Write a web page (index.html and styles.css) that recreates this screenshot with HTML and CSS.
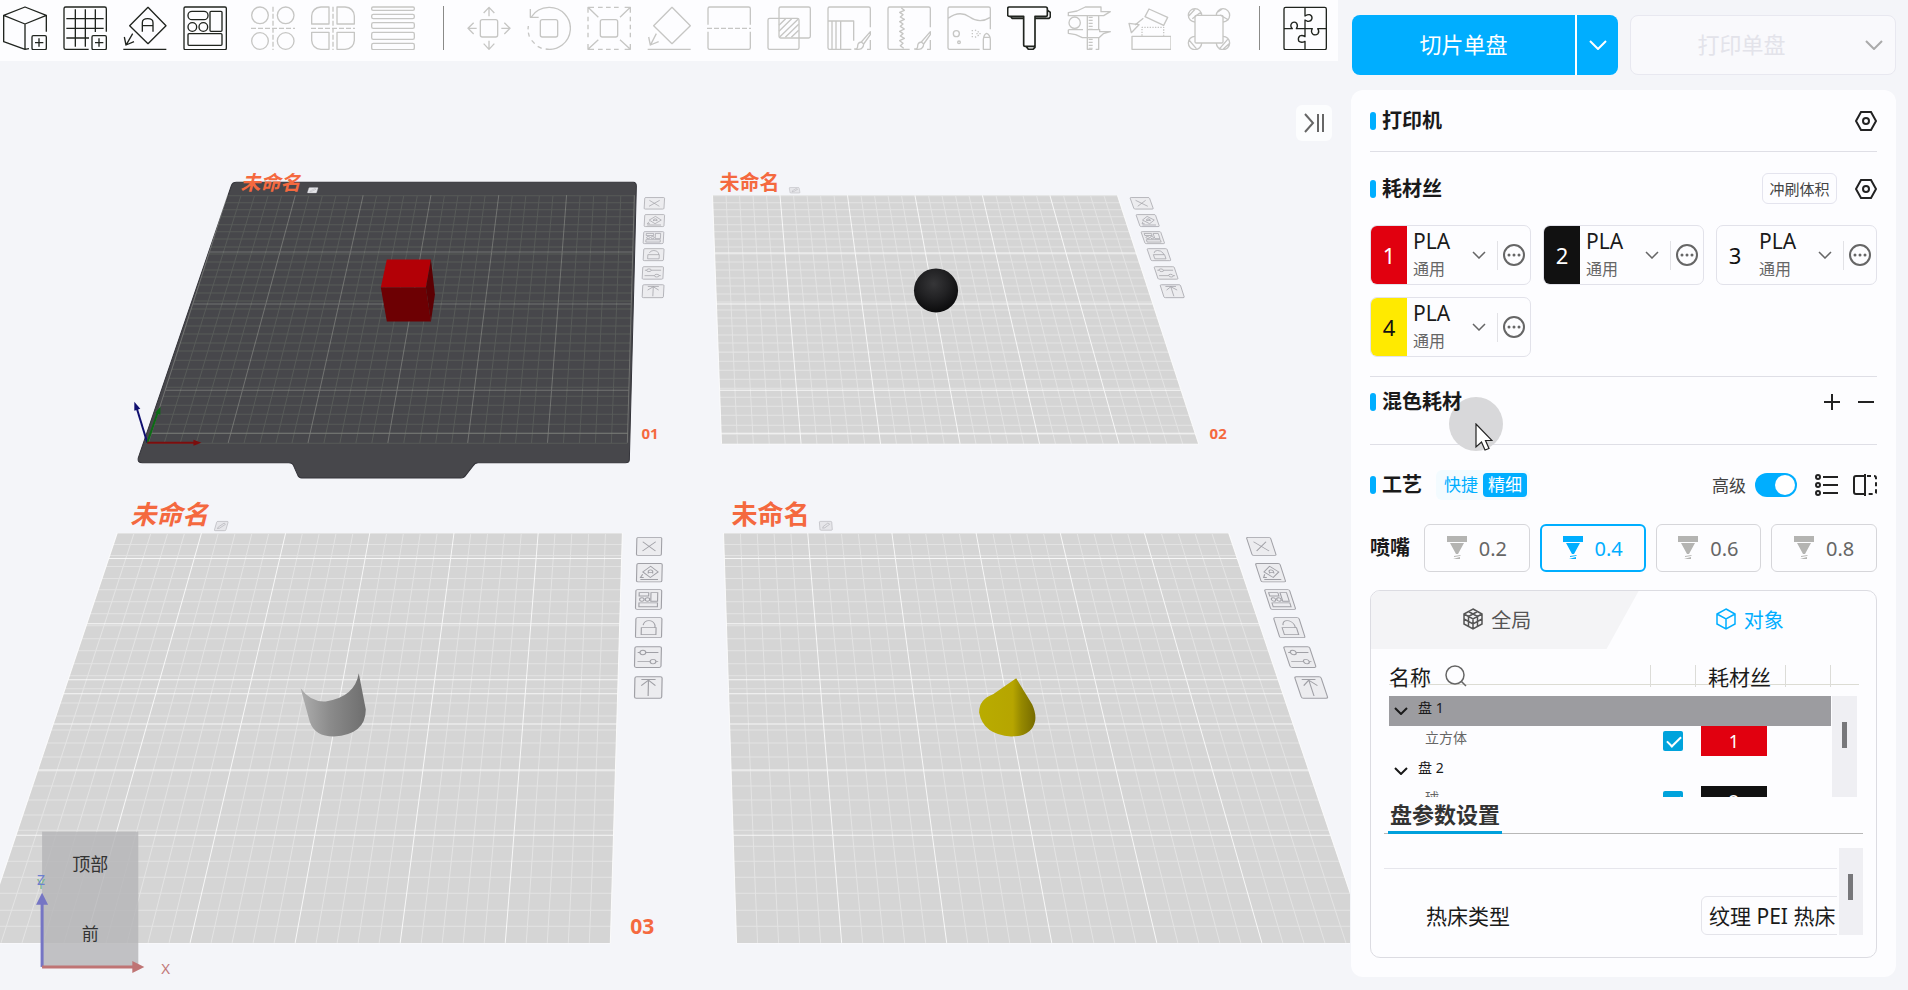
FILE: index.html
```html
<!DOCTYPE html>
<html lang="zh-CN">
<head>
<meta charset="utf-8">
<title>切片</title>
<link rel="stylesheet" href="styles.css">
</head>
<body>
<div class="app">
<main class="workspace">
  <nav class="toolbar" aria-label="工具栏">
    <button class="tool" aria-label="添加模型"><svg viewBox="10 18 132 132"><path d="M140 95V46L76 21 12 46V125L76 148 88 146M12 46 76 72 140 46M76 72V148"/><rect x="97" y="107" width="43" height="42" rx="4"/><path d="M118 115V140M106 128H131"/></svg></button>
    <button class="tool" aria-label="添加盘"><svg viewBox="190 18 132 132"><path d="M320 95V26Q320 21 315 21H198Q193 21 193 26V143Q193 148 198 148H267M227 28V140M257 28V140M287 28V96M200 56H312M200 85H312M200 114H268"/><rect x="277" y="107" width="43" height="42" rx="4"/><path d="M298 115V140M286 128H311"/></svg></button>
    <button class="tool" aria-label="自动朝向"><svg viewBox="370 18 132 132"><path d="M445 22 499 77 445 131 390 77ZM428 95V68Q428 56 444 56T460 68V95M428 77H460M371 148H500M399 101 380 134M374 111 379 135 403 125"/></svg></button>
    <button class="tool" aria-label="自动摆放"><svg viewBox="550 18 132 132"><rect x="553" y="21" width="127" height="128" rx="4"/><rect x="565" y="34" width="60" height="25" rx="12"/><rect x="631" y="34" width="36" height="60" rx="3"/><circle cx="578" cy="81" r="13"/><circle cx="611" cy="81" r="13"/><rect x="565" y="101" width="102" height="35" rx="3"/></svg></button>
    <button class="tool off group" disabled aria-label="拆分为对象"><svg viewBox="754 18 132 132"><circle cx="781" cy="46" r="25"/><circle cx="858" cy="46" r="25"/><circle cx="781" cy="123" r="25"/><circle cx="858" cy="123" r="25"/><path stroke-dasharray="15 6" d="M820 20V150M754 85H886"/></svg></button>
    <button class="tool off" disabled aria-label="拆分为零件"><svg viewBox="934 18 132 132"><path d="M936 72V48Q938 23 964 21H988V72ZM1012 72V21H1036Q1062 23 1064 48V72ZM936 97H988V148H964Q938 146 936 121ZM1012 97H1064V121Q1062 146 1036 148H1012Z"/><path stroke-dasharray="15 6" d="M1000 20V150M934 85H1066"/></svg></button>
    <button class="tool off" disabled aria-label="可变层高"><svg viewBox="1114 18 132 132"><rect x="1116" y="21" width="128" height="10" rx="4"/><rect x="1116" y="43" width="128" height="13" rx="5"/><rect x="1116" y="68" width="128" height="17" rx="5"/><rect x="1116" y="97" width="128" height="21" rx="5"/><rect x="1116" y="130" width="128" height="19" rx="5"/></svg></button>
    <span class="rule"></span>
    <button class="tool off" disabled aria-label="移动"><svg viewBox="82 18 132 132"><rect x="122" y="59" width="52" height="52" rx="6"/><path d="M148 49V23M132 39 148 22 164 39M148 122V148M132 131 148 148 164 131M111 85H85M102 68 85 85 102 102M185 85H211M194 68 211 85 194 102"/></svg></button>
    <button class="tool off" disabled aria-label="旋转"><svg viewBox="262 18 132 132"><rect x="302" y="59" width="52" height="52" rx="6"/><path d="M275 51Q292 23 328 22A63 63 0 1 1 318 147M306 145 294 139M285 131 276 121M269 110 266 98M265 88 266 78M272 27V52H297"/></svg></button>
    <button class="tool off" disabled aria-label="缩放"><svg viewBox="442 18 132 132"><rect x="482" y="59" width="52" height="52" rx="6"/><path d="M445 38V22H463M555 22H572V38M572 132V148H555M463 148H445V132M445 22 476 52M572 22 541 52M445 148 476 119M572 148 541 119"/><path stroke-dasharray="14 10" d="M475 22H545M475 148H545M445 50V122M572 50V122"/></svg></button>
    <button class="tool off" disabled aria-label="放置到面"><svg viewBox="622 18 132 132"><path d="M697 22 752 77 697 131 642 77ZM624 148H753M650 101 633 134M627 111 632 135 657 125"/></svg></button>
    <button class="tool off" disabled aria-label="剪切"><svg viewBox="802 18 132 132"><path d="M805 74V26Q805 21 810 21H927Q932 21 932 26V74M805 95V143Q805 148 810 148H927Q932 148 932 143V95"/><path stroke-dasharray="15 6" d="M802 85H935"/></svg></button>
    <button class="tool off" disabled aria-label="布尔运算"><svg viewBox="982 18 132 132"><rect x="985" y="55" width="93" height="93" rx="5"/><rect x="1018" y="21" width="94" height="93" rx="5"/><path d="M1018 76 1038 56M1018 94 1056 56M1020 111 1075 58M1037 112 1077 73M1055 112 1077 91"/></svg></button>
    <button class="tool off" disabled aria-label="支撑绘制"><svg viewBox="1162 18 132 132"><path d="M1292 82V26Q1292 21 1287 21H1170Q1165 21 1165 26V143Q1165 148 1170 148H1235M1165 63H1242V122M1177 63V148M1189 63V148M1203 63V148M1292 120V148H1282M1292 95 1265 126 1272 132 1292 104ZM1265 126Q1254 128 1254 138T1245 147Q1272 152 1272 132"/></svg></button>
    <button class="tool off" disabled aria-label="Z缝绘制"><svg viewBox="22 18 132 132"><path d="M152 82V26Q152 21 147 21H30Q25 21 25 26V143Q25 148 30 148H90M65 24 74 31 60 37 70 44 62 51 74 58 60 65 70 72 62 79 74 87 60 94 70 101 62 108 74 115 60 122 70 130 62 137 72 145M152 120V148H142M152 95 125 126 132 132 152 104ZM125 126Q114 128 114 138T105 147Q132 152 132 132"/></svg></button>
    <button class="tool off" disabled aria-label="涂色"><svg viewBox="202 18 132 132"><path d="M332 88V26Q332 21 327 21H210Q205 21 205 26V143Q205 148 210 148H300M205 55Q240 30 270 51T332 52"/><circle cx="230" cy="101" r="9"/><circle cx="238" cy="127" r="4"/><path d="M311 148V118Q313 102 321 100 331 104 332 118V148ZM311 112H332"/><path stroke-dasharray="4 5" d="M278 90V112M286 90 300 98M286 112 300 104M290 101H308"/></svg></button>
    <button class="tool" aria-label="文字浮雕"><svg viewBox="382 18 132 132"><path class="heavy" d="M389 21H498Q503 21 503 26V44Q503 49 498 49H466V134Q466 139 461 139H437Q432 139 432 134V49H389Q384 49 384 44V26Q384 21 389 21ZM392 49 397 55H432M504 31 512 37V51L508 55H467M440 140 446 148H460L466 142V55"/></svg></button>
    <button class="tool off" disabled aria-label="测量"><svg viewBox="562 18 132 132"><path d="M592 33 617 21H664V35H692L672 47H566V38ZM566 89H610M566 89V100L588 104 608 113H658L671 101 692 95H660V89H622M623 48V148H638M657 48V89M657 114V148H648"/><circle cx="585" cy="68" r="17"/><path stroke-dasharray="4 5" stroke-width="12" d="M633 50V88M633 116V146"/></svg></button>
    <button class="tool off" disabled aria-label="装配"><svg viewBox="742 18 132 132"><path d="M808 27 864 52 852 76 796 50ZM757 109H874V148H757ZM791 55 766 75M748 70 755 98 778 74Z"/><path stroke-dasharray="4 4" d="M787 107V82H852V107"/></svg></button>
    <button class="tool off" disabled aria-label="耳片"><svg viewBox="922 18 132 132"><rect x="946" y="46" width="84" height="83" rx="4"/><path d="M946 66A20 20 0 1 1 966 46M1010 46A20 20 0 1 1 1030 66M946 109A20 20 0 1 0 966 129M1010 129A20 20 0 1 0 1030 109M928 47 946 28M938 56 964 36M1012 37 1028 27M1021 45 1047 60M928 120 950 146M1018 148 1044 118M1030 148 1050 130"/></svg></button>
    <span class="rule"></span>
    <button class="tool" aria-label="拼图"><svg viewBox="1210 20 132 132"><rect x="1213" y="24" width="127" height="127" rx="5"/><path d="M1276 24V50Q1284 45 1290 46 1298 49 1297 57 1295 67 1284 66L1276 62V88M1213 88H1238Q1230 80 1236 72 1244 65 1251 72 1256 80 1250 88H1298Q1292 98 1300 105 1308 109 1315 103 1320 96 1314 88H1340M1276 88V112Q1268 106 1260 110 1254 116 1257 125 1264 132 1276 126V151"/></svg></button>
  </nav>

  <section class="viewport" aria-label="三维视图">
    <svg class="scene" viewBox="0 61 1350 929" preserveAspectRatio="xMinYMin slice">
      <defs>
        <linearGradient id="cyl"><stop offset="0" stop-color="#aeaeae"/><stop offset=".45" stop-color="#8b8b8b"/><stop offset="1" stop-color="#6e6e6e"/></linearGradient>
        <radialGradient id="ball" cx=".45" cy=".35" r=".65"><stop offset="0" stop-color="#363638"/><stop offset=".5" stop-color="#222224"/><stop offset="1" stop-color="#0b0b0c"/></radialGradient>
        <linearGradient id="cone"><stop offset="0" stop-color="#b9ac00"/><stop offset=".6" stop-color="#b6a500"/><stop offset=".75" stop-color="#968900"/><stop offset="1" stop-color="#766b00"/></linearGradient>
        <g id="b-frame"><rect x=".5" y=".5" width="23" height="23" rx="1.5" fill="#ececef"/></g>
        <g id="b-close"><use href="#b-frame"/><path d="M6 6 18 18M18 6 6 18"/></g>
        <g id="b-orient"><use href="#b-frame"/><path d="M13 4 20 11 13 18 6 11ZM11 13V10Q13 7 15 10V13M11 11.500H15M4 20.500H20M6 14 4 18 7 18"/></g>
        <g id="b-arrange"><use href="#b-frame"/><path d="M3.500 4H12V8H3.500ZM14 4H20V14H14ZM3.500 16H20V20.500H3.500Z"/><circle cx="6" cy="12" r="2"/><circle cx="11" cy="12" r="2"/></g>
        <g id="b-lock"><use href="#b-frame"/><path d="M5.500 12H18.500V20H5.500ZM7 9Q8 4 12 4T17.500 9V12"/></g>
        <g id="b-tune"><use href="#b-frame"/><path d="M3 7H5M10 7H21M3 17H14M19 17H21"/><circle cx="7.500" cy="7" r="2.500"/><circle cx="16.500" cy="17" r="2.500"/></g>
        <g id="b-top"><use href="#b-frame"/><path d="M6 3.500H18M12 4V21M6 10 12 4 18 10"/></g>
        <g id="b-edit"><rect x="1" y="1" width="22" height="22" rx="2" fill="#e6e6ea"/><path d="M6 18 7 14 16 5 19 8 10 17Z"/></g>
      </defs>

      <path fill="#47474b" stroke="#34343a" d="M236 182H632Q635 182 635 186L628 459Q628 462 624 462H477Q474 462 472 465L465 474Q463 477 460 477H301Q298 477 297 474L293 465Q292 462 288 462H142Q137 462 138 457L231 185Q232 182 236 182Z"/>
      <g class="bed dark" data-corners="227 195 633 195 626 442 148 442" data-strong="251 303 389 432"></g>
      <g class="bed" data-corners="711 195 1115 195 1196 443 720 443" data-strong="252 303 389 432"></g>
      <g class="bed" data-corners="117 532 621 532 609 941 -20 941" data-strong="557 622 678 692 722 768 833"></g>
      <g class="bed" data-corners="722 532 1226 532 1364 941 735 941" data-strong="557 622 678 692 722 768 833"></g>

      <g class="solid">
        <path fill="#b30006" d="M386 259H430L425 287H380Z"/>
        <path fill="#6d0003" d="M380 287H425L430 321H386Z"/>
        <path fill="#5c0003" d="M430 259 434 294 430 321 425 287Z"/>
        <ellipse cx="934" cy="290" rx="22" ry="22" fill="url(#ball)"/>
        <path fill="url(#cyl)" d="M300 687Q310 701 325 700 354 696 358 672L365 708Q365 733 333 735 314 735 309 720Z"/>
        <path fill="url(#cone)" d="M1014 677 1030 703Q1034 712 1033 719 1030 735 1009 735 981 733 977 711 977 698 991 693Z"/>
      </g>

      <g fill="none" stroke-width="2"><path stroke="#101070" d="M147 442 136 406"/><path stroke="#0c6b14" d="M147 442 158 410"/><path stroke="#7c0d0d" d="M147 442H196"/></g>
      <g class="solid"><path fill="#101070" d="M134 401 140 408 134 410Z"/><path fill="#0c6b14" d="M160 406 160 414 155 412Z"/><path fill="#7c0d0d" d="M201 442 193 439V445Z"/></g>

      <g class="plate-text">
        <text x="240" y="190" font-size="20" font-style="italic">未命名</text>
        <text x="718" y="190" font-size="20">未命名</text>
        <text x="130" y="523" font-size="26" font-style="italic">未命名</text>
        <text x="730" y="523" font-size="26">未命名</text>
        <text x="640" y="438" font-size="15">01</text>
        <text x="1207" y="438" font-size="15">02</text>
        <text x="629" y="932" font-size="21">03</text>
      </g>

      <g class="plate-buttons">
        <use href="#b-edit" transform="matrix(.42 0 -.08 .25 308 187)"/>
        <use href="#b-edit" transform="matrix(.45 0 .04 .25 787 187)"/>
        <use href="#b-edit" transform="matrix(.52 0 -.12 .42 216 520)"/>
        <use href="#b-edit" transform="matrix(.56 0 .03 .4 817 520)"/>

        <use href="#b-close" transform="matrix(.86 0 -.03 .5 643 197)"/>
        <use href="#b-orient" transform="matrix(.86 0 -.03 .52 643 214)"/>
        <use href="#b-arrange" transform="matrix(.87 0 -.03 .52 642 231)"/>
        <use href="#b-lock" transform="matrix(.88 0 -.03 .52 642 248)"/>
        <use href="#b-tune" transform="matrix(.9 0 -.03 .54 641 266)"/>
        <use href="#b-top" transform="matrix(.92 0 -.03 .56 641 284)"/>

        <use href="#b-close" transform="matrix(.84 0 .18 .5 1127 197)"/>
        <use href="#b-orient" transform="matrix(.84 0 .18 .52 1133 214)"/>
        <use href="#b-arrange" transform="matrix(.85 0 .18 .52 1138 231)"/>
        <use href="#b-lock" transform="matrix(.86 0 .18 .52 1144 248)"/>
        <use href="#b-tune" transform="matrix(.87 0 .18 .54 1151 266)"/>
        <use href="#b-top" transform="matrix(.88 0 .18 .56 1157 284)"/>

        <use href="#b-close" transform="matrix(1.08 0 -.02 .78 635 536)"/>
        <use href="#b-orient" transform="matrix(1.1 0 -.02 .8 635 562)"/>
        <use href="#b-arrange" transform="matrix(1.12 0 -.02 .86 634 588)"/>
        <use href="#b-lock" transform="matrix(1.13 0 -.02 .87 634 616)"/>
        <use href="#b-tune" transform="matrix(1.15 0 -.02 .9 633 645)"/>
        <use href="#b-top" transform="matrix(1.18 0 -.02 .93 633 675)"/>

        <use href="#b-close" transform="matrix(1.04 0 .26 .78 1243 536)"/>
        <use href="#b-orient" transform="matrix(1.06 0 .26 .8 1252 562)"/>
        <use href="#b-arrange" transform="matrix(1.08 0 .28 .86 1261 588)"/>
        <use href="#b-lock" transform="matrix(1.1 0 .28 .87 1270 616)"/>
        <use href="#b-tune" transform="matrix(1.12 0 .3 .9 1280 645)"/>
        <use href="#b-top" transform="matrix(1.14 0 .31 .93 1291 675)"/>
      </g>

      <g class="nav-cube">
        <rect x="42" y="830" width="96" height="136" fill="#b4b4b6" fill-opacity=".8"/>
        <text x="90" y="869" text-anchor="middle" font-size="18">顶部</text>
        <text x="90" y="938" text-anchor="middle" font-size="17">前</text>
        <path class="up" d="M42 965V900"/><path fill="#7575c4" d="M42 891 48 903H36Z"/>
        <path class="across" d="M42 965H134"/><path fill="#bf7474" d="M144 965 132 971V959Z"/>
        <text x="37" y="887" font-size="14" fill="#78b78c">Y</text>
        <text x="37" y="883" font-size="14" fill="#6d7fd0">Z</text>
        <text x="161" y="972" font-size="15" fill="#c27a7a">X</text>
      </g>
    </svg>
    <button class="collapse" aria-label="收起侧栏"><svg viewBox="0 0 20 20"><path d="M1 1 9 10 1 19M14 1V19M19 1V19"/></svg></button>
  </section>
</main>

<aside class="side">
  <div class="actions">
    <div class="split primary"><button class="split-main">切片单盘</button><button class="split-more" aria-label="切片选项"><svg viewBox="0 0 18 10"><path d="M1 1 9 9 17 1"/></svg></button></div>
    <div class="split ghost"><button class="split-main" disabled>打印单盘</button><button class="split-more" aria-label="打印选项"><svg viewBox="0 0 18 10"><path d="M1 1 9 9 17 1"/></svg></button></div>
  </div>

  <div class="card">
    <section class="block printer">
      <header class="head"><h2>打印机</h2><button class="icon" aria-label="打印机设置"><svg viewBox="0 0 22 20"><path d="M6 1H16L21 10 16 19H6L1 10Z"/><circle cx="11" cy="10" r="3"/></svg></button></header>
    </section>

    <section class="block filament">
      <header class="head"><h2>耗材丝</h2><button class="flush">冲刷体积</button><button class="icon" aria-label="耗材丝设置"><svg viewBox="0 0 22 20"><path d="M6 1H16L21 10 16 19H6L1 10Z"/><circle cx="11" cy="10" r="3"/></svg></button></header>
      <div class="spools">
        <div class="spool"><button class="chip red">1</button><div class="kind"><b>PLA</b><span>通用</span></div><button class="down" aria-label="选择耗材 1"><svg viewBox="0 0 14 8"><path d="M1 1 7 7 13 1"/></svg></button><button class="more" aria-label="更多 1"><svg viewBox="0 0 24 24"><circle cx="12" cy="12" r="10"/><path class="dots" d="M7 12H7M12 12H12M17 12H17"/></svg></button></div>
        <div class="spool"><button class="chip black">2</button><div class="kind"><b>PLA</b><span>通用</span></div><button class="down" aria-label="选择耗材 2"><svg viewBox="0 0 14 8"><path d="M1 1 7 7 13 1"/></svg></button><button class="more" aria-label="更多 2"><svg viewBox="0 0 24 24"><circle cx="12" cy="12" r="10"/><path class="dots" d="M7 12H7M12 12H12M17 12H17"/></svg></button></div>
        <div class="spool"><button class="chip white">3</button><div class="kind"><b>PLA</b><span>通用</span></div><button class="down" aria-label="选择耗材 3"><svg viewBox="0 0 14 8"><path d="M1 1 7 7 13 1"/></svg></button><button class="more" aria-label="更多 3"><svg viewBox="0 0 24 24"><circle cx="12" cy="12" r="10"/><path class="dots" d="M7 12H7M12 12H12M17 12H17"/></svg></button></div>
        <div class="spool"><button class="chip yellow">4</button><div class="kind"><b>PLA</b><span>通用</span></div><button class="down" aria-label="选择耗材 4"><svg viewBox="0 0 14 8"><path d="M1 1 7 7 13 1"/></svg></button><button class="more" aria-label="更多 4"><svg viewBox="0 0 24 24"><circle cx="12" cy="12" r="10"/><path class="dots" d="M7 12H7M12 12H12M17 12H17"/></svg></button></div>
      </div>
    </section>

    <section class="block mix">
      <span class="halo"></span>
      <header class="head"><h2>混色耗材</h2><button class="icon" aria-label="添加"><svg viewBox="0 0 22 20"><path d="M11 2V18M3 10H19"/></svg></button><button class="icon" aria-label="移除"><svg viewBox="0 0 22 20"><path d="M3 10H19"/></svg></button></header>
      <svg class="pointer" viewBox="0 0 18 28"><path d="M1 1V24L6.500 19 10 27 14 25.500 10.500 17.500H17Z"/></svg>
    </section>

    <section class="block process">
      <header class="head"><h2>工艺</h2>
        <div class="segment"><button>快捷</button><button class="on">精细</button></div>
        <label class="advanced">高级<input type="checkbox" class="toggle" checked></label>
        <button class="icon wide" aria-label="列表"><svg viewBox="0 0 24 22"><circle cx="3" cy="3" r="2"/><circle cx="3" cy="11" r="2"/><circle cx="3" cy="19" r="2"/><path d="M8 3H23M8 11H23M8 19H23"/></svg></button>
        <button class="icon wide last" aria-label="对比"><svg viewBox="0 0 24 22"><path d="M12 2H3Q1 2 1 4V18Q1 20 3 20H12M12 0V22"/><path stroke-dasharray="4 3" d="M14 2H21Q23 2 23 4V18Q23 20 21 20H14"/></svg></button>
      </header>
      <div class="nozzles"><h3>喷嘴</h3>
        <button><svg viewBox="0 0 20 24"><path d="M0 0H20V6H0ZM3 7H17L11 18H9ZM7 20 14 19 13 20 7 21ZM6 23 13 21V23Z"/></svg>0.2</button>
        <button class="on"><svg viewBox="0 0 20 24"><path d="M0 0H20V6H0ZM3 7H17L11 18H9ZM7 20 14 19 13 20 7 21ZM6 23 13 21V23Z"/></svg>0.4</button>
        <button><svg viewBox="0 0 20 24"><path d="M0 0H20V6H0ZM3 7H17L11 18H9ZM7 20 14 19 13 20 7 21ZM6 23 13 21V23Z"/></svg>0.6</button>
        <button><svg viewBox="0 0 20 24"><path d="M0 0H20V6H0ZM3 7H17L11 18H9ZM7 20 14 19 13 20 7 21ZM6 23 13 21V23Z"/></svg>0.8</button>
      </div>

      <div class="objects">
        <div class="tabs">
          <button class="tab"><svg viewBox="0 0 20 22"><path d="M10 1 19 6V16L10 21 1 16V6ZM1 6 10 11 19 6M10 11V21M1 11 10 16 19 11M5.500 3.500 14.500 8.500V18.500M14.500 3.500 5.500 8.500V18.500"/></svg>全局</button>
          <button class="tab on"><svg viewBox="0 0 20 22"><path d="M10 1 19 6V16L10 21 1 16V6ZM1 6 10 11 19 6M10 11V21"/></svg>对象</button>
        </div>
        <table class="tree">
          <thead><tr><th>名称 <svg viewBox="0 0 22 22"><circle cx="10" cy="10" r="9"/><path d="M16 16 21 21"/></svg></th><th></th><th>耗材丝</th><th></th><th></th></tr></thead>
          <tbody>
            <tr class="sel"><td class="plate"><svg viewBox="0 0 14 8"><path d="M1 1 7 7 13 1"/></svg>盘 1</td><td></td><td></td></tr>
            <tr><td class="part">立方体</td><td><input type="checkbox" checked aria-label="立方体"></td><td><span class="swatch red">1</span></td></tr>
            <tr><td class="plate"><svg viewBox="0 0 14 8"><path d="M1 1 7 7 13 1"/></svg>盘 2</td><td></td><td></td></tr>
            <tr><td class="part">球</td><td><input type="checkbox" checked aria-label="球"></td><td><span class="swatch black">2</span></td></tr>
          </tbody>
        </table>
        <div class="params"><h3>盘参数设置</h3></div>
        <div class="settings">
          <div class="setting"><label for="bed">热床类型</label><select id="bed"><option>纹理 PEI 热床</option></select></div>
          <span class="track"></span>
        </div>
      </div>
    </section>
  </div>
</aside>
</div>
<script src="scene.js"></script>
</body>
</html>
```
FILE: styles.css
```css
* { box-sizing: border-box; }
body { margin: 0; background: #f4f5f9; color: #1a1a1a; font-family: "Noto Sans", "Noto Sans CJK SC", sans-serif; }
button, select, input { font: inherit; color: inherit; margin: 0; }
button { padding: 0; border: 0; background: none; }
svg { display: block; fill: none; stroke: currentColor; }
h2, h3 { margin: 0; font-size: 20px; line-height: 28px; font-weight: 700; }

.app { display: grid; grid-template-columns: minmax(0, 1fr) 546px; gap: 0; min-height: 100vh; padding-right: 12px; }
.workspace { display: flex; flex-direction: column; min-width: 0; overflow: hidden; }

.toolbar { display: flex; align-items: center; gap: 16px; height: 61px; padding: 0 11px 5px 3px; margin-right: 12px; background: #fdfdff; }
.tool { flex: none; width: 44px; height: 44px; color: #20241f; }
.tool svg { width: 44px; height: 44px; stroke-width: 4; stroke-linejoin: round; }
.tool .heavy { stroke-width: 5; }
.tool.off { color: #c6c6c4; }
.tool.group { margin-left: 8px; }
.rule { flex: none; width: 1px; height: 44px; margin: 0 7px 0 12px; background: #8a8a88; }

.viewport { position: relative; flex: 1; overflow: hidden; }
.scene { position: absolute; inset: 0; width: 100%; height: 100%; }
.solid { stroke: none; }
.bed .base { fill: #d5d5d5; stroke: none; }
.bed .minor { stroke: #fff; stroke-opacity: .35; stroke-width: 1; }
.bed .major { stroke: #fff; stroke-opacity: .8; stroke-width: 1; }
.bed.dark .base { fill: none; }
.bed.dark .minor { stroke: #9aa890; stroke-opacity: .2; }
.bed.dark .major { stroke: #c0c4b8; stroke-opacity: .35; }
.plate-text { fill: #f4693f; stroke: none; font-weight: 700; }
.plate-buttons { stroke: #a0a0a6; stroke-width: 1; }
.nav-cube { stroke: none; }
.nav-cube text:not([fill]) { fill: #333; }
.up { stroke: #7575c4; stroke-width: 3; }
.across { stroke: #bf7474; stroke-width: 3; }
.collapse { position: absolute; top: 44px; right: 18px; width: 36px; height: 36px; display: grid; place-items: center; border-radius: 6px; background: #fcfdfe; color: #666; }
.collapse svg { width: 20px; height: 20px; stroke-width: 2; }

.side { display: flex; flex-direction: column; gap: 15px; padding: 15px 0; }
.actions { display: grid; grid-template-columns: 1fr 1fr; gap: 12px; height: 60px; margin-left: 2px; }
.split { display: flex; border-radius: 8px; overflow: hidden; font-size: 22px; }
.split-main { flex: 1; padding-bottom: 4px; }
.split-more { display: grid; place-items: center; width: 43px; }
.split-more svg { width: 18px; height: 10px; stroke-width: 2; }
.primary { background: #00aeff; color: #fff; }
.primary .split-more { border-left: 2px solid #fff; }
.ghost { border: 1px solid #e8e8f0; background: #f9f9fc; }
.ghost .split-main { color: #e3e3ea; }
.ghost .split-more { color: #aaa; }

.card { margin-left: 1px; padding: 0 19px 19px 19px; border-radius: 12px; background: #fdfdff; }
.block { position: relative; border-bottom: 1px solid #dfdfe6; }
.head { display: flex; align-items: center; gap: 12px; height: 61px; }
.head h2 { position: relative; display: flex; align-items: center; gap: 6px; margin-right: auto; }
.head h2::before { content: ""; width: 6px; height: 18px; border-radius: 3px; background: #00aeff; }
.icon { width: 22px; height: 22px; display: grid; place-items: center; color: #222; }
.icon svg { width: 22px; height: 20px; stroke-width: 2; }
.filament .head { height: 73px; gap: 18px; }
.flush { width: 75px; height: 31px; border: 1px solid #e4e4ee; border-radius: 6px; font-size: 15px; line-height: 28px; color: #444; white-space: nowrap; }
.spools { display: grid; grid-template-columns: repeat(3, minmax(0, 1fr)); gap: 12px; padding-bottom: 19px; }
.spool { display: flex; align-items: center; height: 60px; border: 1px solid #e2e2ea; border-radius: 7px; overflow: hidden; }
.chip { width: 36px; height: 60px; font-size: 22px; }
.red { background: #e1000f; color: #fff; }
.black { background: #111; color: #fff; }
.white { color: #111; }
.yellow { background: #ffea00; color: #111; }
.kind { display: flex; flex-direction: column; flex: 1; padding-left: 6px; }
.kind b { font-size: 21px; line-height: 28px; font-weight: 400; }
.kind span { font-size: 16px; line-height: 28px; color: #666; }
.down { width: 14px; margin-right: 11px; color: #666; }
.down svg { width: 14px; height: 8px; stroke-width: 1.5; }
.more { display: grid; place-items: center; width: 33px; height: 29px; border-left: 1px solid #e2e2e6; color: #666; }
.more svg { width: 24px; height: 24px; stroke-width: 2; }
.dots { stroke-width: 3; stroke-linecap: round; }

.mix { padding-bottom: 17px; }
.mix .head { position: relative; height: 50px; }
.halo { position: absolute; left: 79px; top: 20px; width: 54px; height: 54px; border-radius: 50%; background: #d8d8da; }
.pointer { position: absolute; left: 105px; top: 46px; width: 18px; height: 28px; z-index: 1; fill: #fff; stroke: #222; stroke-width: 1.2; }
.block.process { border: 0; }
.process .head { height: 79px; }
.process .head h2 { margin-right: 2px; }
.segment { display: flex; align-items: center; height: 30px; margin-right: auto; padding: 0 3px; border-radius: 6px; background: #f3fbff; color: #00aeff; font-size: 17px; }
.segment button { width: 44px; height: 24px; line-height: 24px; border-radius: 4px; }
.segment .on { background: #00aeff; color: #fff; }
.advanced { display: flex; align-items: center; gap: 9px; margin-right: 6px; font-size: 17px; color: #444; }
.toggle { appearance: none; display: block; width: 42px; height: 24px; padding: 2px; border-radius: 12px; background: #00aeff; }
.toggle::before { content: ""; display: block; width: 20px; height: 20px; margin-left: 18px; border-radius: 50%; background: #fff; }
.icon.wide { width: 24px; margin-right: 2px; }
.icon.wide.last { margin-right: 0; }
.icon.wide svg { width: 24px; height: 22px; }
.nozzles { display: grid; grid-template-columns: 44px repeat(4, 1fr); column-gap: 10px; align-items: center; }
.nozzles button { display: flex; align-items: center; justify-content: center; gap: 12px; height: 48px; border: 1px solid #d6d6da; border-radius: 6px; font-size: 20px; color: #666; }
.nozzles svg { width: 20px; height: 24px; fill: #b4b4b2; stroke: none; }
.nozzles .on { border: 2px solid #00aeff; color: #00aeff; }
.nozzles .on svg { fill: #00aeff; }

.objects { margin-top: 18px; border: 1px solid #dcdce2; border-radius: 10px; overflow: hidden; padding-bottom: 22px; }
.tabs { position: relative; display: grid; grid-template-columns: 1fr 1fr; height: 58px; }
.tabs::before { content: ""; position: absolute; inset: 0 47% 0 0; background: #f4f4f6; clip-path: polygon(0 0, 100% 0, 88% 100%, 0 100%); }
.tab { position: relative; display: flex; align-items: center; justify-content: center; gap: 8px; padding-bottom: 2px; font-size: 20px; color: #555; }
.tab svg { width: 20px; height: 22px; stroke-width: 1.5; }
.tab.on { color: #00aeff; }

.tree { display: block; position: relative; margin: 16px 17px 0 18px; }
.tree thead, .tree tbody { display: block; }
.tree tr { display: grid; grid-template-columns: minmax(0, 1fr) 45px 90px 45px 28px; }
.tree th { display: flex; align-items: center; gap: 14px; height: 22px; padding: 0 0 0 12px; border-right: 1px solid #dcdcd8; font-size: 21px; font-weight: 400; white-space: nowrap; }
.tree th:first-child { padding-left: 0; }
.tree th:last-child { border: 0; }
.tree th svg { width: 22px; height: 22px; stroke: #666; stroke-width: 1.5; }
.tree thead { height: 31px; background: linear-gradient(#dcdcd4, #dcdcd4) 0 19px / 100% 1px no-repeat; }
.tree tbody { position: relative; height: 101px; overflow: hidden; }
.tree tbody::after { content: ""; position: absolute; top: 0; right: 2px; width: 25px; height: 101px; background: linear-gradient(#77777a, #77777a) 10px 26px / 5px 26px no-repeat #efeff3; }
.tree tbody tr { grid-template-columns: minmax(0, 1fr) 47px 66px 64px; height: 30px; margin-right: 28px; }
.tree tbody td { padding: 0; }
.tree .sel { background: #9c9ca0; }
.plate, .part { font-size: 14px; line-height: 23px; }
.tree tbody .plate { display: flex; gap: 10px; padding-left: 5px; }
.plate svg { width: 14px; height: 8px; margin-top: 11px; stroke-width: 2; }
.tree tbody .part { padding-left: 36px; color: #666; }
.tree tbody input { appearance: none; display: block; width: 20px; height: 20px; margin: 5px 0 0 9px; border-radius: 2px; background: #00a3dc; }
.tree tbody input::before { content: ""; display: block; width: 12px; height: 6px; margin: 5px 0 0 4px; border-left: 2px solid #fff; border-bottom: 2px solid #fff; rotate: -45deg; }
.swatch { display: grid; place-items: center; height: 30px; font-size: 18px; }

.params { display: flex; height: 37px; margin: 0 13px; padding-left: 4px; border-bottom: 1px solid #b8b8b8; }
.params h3 { height: 37px; padding: 0 2px; border-bottom: 3px solid #00a0dc; font-size: 22px; line-height: 34px; color: #333; }
.settings { display: flex; gap: 2px; margin: 14px 13px 0; }
.setting { flex: 1; min-width: 0; display: flex; align-items: flex-end; justify-content: space-between; height: 87px; padding-left: 42px; overflow: hidden; font-size: 21px; line-height: 38px; background: linear-gradient(#e6e6ec, #e6e6ec) 0 20px / 100% 1px no-repeat; }
.setting select { flex: none; appearance: none; width: 160px; height: 39px; margin-right: -24px; padding: 0 7px; border: 1px solid #e4e4ea; border-radius: 6px; background: none; }
.track { width: 24px; background: linear-gradient(#77777a, #77777a) 9px 26px / 5px 26px no-repeat #efeff3; }
```
FILE: scene.js
```javascript
// Draws each build plate as a grid seen in perspective.
const NS = "http://www.w3.org/2000/svg";
const CELLS = 30;
const MAJOR = 5;

function addPath(parent, name, d) {
  const p = document.createElementNS(NS, "path");
  p.setAttribute("class", name);
  p.setAttribute("d", d);
  parent.appendChild(p);
}

document.querySelectorAll(".bed").forEach((bed) => {
  const [x1, y1, x2, , x3, y3, x4] = bed.dataset.corners.split(" ").map(Number);
  const strong = bed.dataset.strong.split(" ").map(Number);
  const depth = (x3 - x4) / (x2 - x1);
  const row = (y) => {
    const k = (y - y1) / (y3 - y1);
    return `M${x1 + (x4 - x1) * k} ${y}H${x2 + (x3 - x2) * k}`;
  };
  let minor = "";
  let major = "";
  for (let i = 0; i <= CELLS; i++) {
    const t = i / CELLS;
    const line = `M${x1 + (x2 - x1) * t} ${y1}L${x4 + (x3 - x4) * t} ${y3}`;
    if (i % MAJOR === 0) major += line;
    else minor += line;
    const y = (y3 * (1 - t) + y1 * depth * t) / (1 - t + depth * t);
    minor += row(Math.round(y) + 0.5);
  }
  strong.forEach((y) => { major += row(y + 0.5); });
  addPath(bed, "base", `M${x1} ${y1}H${x2}L${x3} ${y3}H${x4}Z`);
  addPath(bed, "minor", minor);
  addPath(bed, "major", major);
});
```
